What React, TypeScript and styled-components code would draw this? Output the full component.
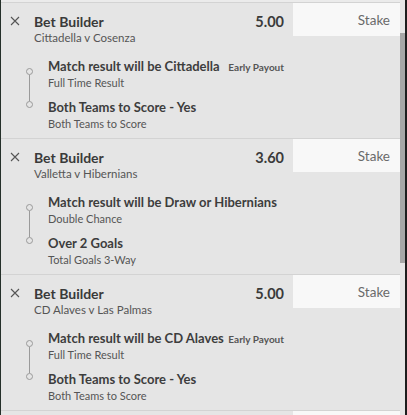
import React from "react";
import styled, { createGlobalStyle } from "styled-components";

const GlobalStyle = createGlobalStyle`
  html, body {
    margin: 0;
    padding: 0;
    background: #e5e5e5;
    overflow: hidden;
  }
  body {
    font-family: Lato, "Open Sans", "Liberation Sans", sans-serif;
    color: #3d3d3d;
  }
`;

type Selection = {
  name: string;
  market: string;
  earlyPayout?: boolean;
};

type Bet = {
  event: string;
  odds: string;
  selections: Selection[];
};

const bets: Bet[] = [
  {
    event: "Cittadella v Cosenza",
    odds: "5.00",
    selections: [
      { name: "Match result will be Cittadella", market: "Full Time Result", earlyPayout: true },
      { name: "Both Teams to Score - Yes", market: "Both Teams to Score" },
    ],
  },
  {
    event: "Valletta v Hibernians",
    odds: "3.60",
    selections: [
      { name: "Match result will be Draw or Hibernians", market: "Double Chance" },
      { name: "Over 2 Goals", market: "Total Goals 3-Way" },
    ],
  },
  {
    event: "CD Alaves v Las Palmas",
    odds: "5.00",
    selections: [
      { name: "Match result will be CD Alaves", market: "Full Time Result", earlyPayout: true },
      { name: "Both Teams to Score - Yes", market: "Both Teams to Score" },
    ],
  },
];

const Frame = styled.div`
  display: flex;
  height: 415px;
  width: 407px;
  border-left: 1px solid #25302a;
  box-sizing: border-box;
`;

const List = styled.div`
  flex: 1;
  padding-top: 2px;
  background: #ebebeb;
  overflow: hidden;
`;

const Card = styled.div`
  display: grid;
  grid-template-columns: 1fr 107px;
  border-top: 1px solid #d3d3d3;
  background: #e5e5e5;
  height: 136px;
  box-sizing: border-box;
`;

const Main = styled.div`
  padding: 8px 9px 8px 9px;
  min-width: 0;
`;

const Header = styled.div`
  display: flex;
  align-items: center;
  height: 20px;
`;

const CloseButton = styled.button`
  all: unset;
  display: flex;
  width: 10px;
  height: 10px;
  margin-right: 14px;
  cursor: pointer;
`;

const Title = styled.div`
  flex: 1;
  font-size: 14px;
  font-weight: 700;
  color: #3a3a3a;
`;

const Odds = styled.div`
  font-size: 14.5px;
  font-weight: 700;
  color: #3a3a3a;
`;

const EventName = styled.div`
  padding-left: 24px;
  font-size: 11.5px;
  line-height: 14px;
  color: #555;
`;

const Selections = styled.div`
  display: grid;
  grid-template-columns: 38px 1fr;
  margin-top: 12px;
`;

const Timeline = styled.div`
  display: flex;
  flex-direction: column;
  align-items: center;
  width: 8px;
  margin-left: 15px;
  margin-top: 11px;
  height: 40px;
`;

const Dot = styled.div`
  width: 7px;
  height: 7px;
  border: 1px solid #9a9a9a;
  border-radius: 50%;
  box-sizing: border-box;
`;

const Line = styled.div`
  flex: 1;
  width: 1px;
  background: #9a9a9a;
`;

const SelectionList = styled.div`
  display: flex;
  flex-direction: column;
  gap: 8px;
`;

const SelectionRow = styled.div`
  display: flex;
  align-items: baseline;
  height: 18px;
`;

const SelectionName = styled.div`
  flex: 1;
  font-size: 13px;
  line-height: 18px;
  font-weight: 700;
  color: #3d3d3d;
  white-space: nowrap;
`;

const Badge = styled.div`
  font-size: 10px;
  font-weight: 700;
  color: #555;
  white-space: nowrap;
`;

const Market = styled.div`
  font-size: 11px;
  line-height: 15px;
  color: #555;
`;

const StakeBox = styled.div`
  height: 33px;
  background: #f8f8f8;
  display: flex;
  align-items: center;
  justify-content: flex-end;
  padding-right: 10px;
  font-size: 13.5px;
  color: #6a6a6a;
`;

const Scrollbar = styled.div`
  width: 5px;
  background: #e6e6e6;
  padding-top: 33px;
  box-sizing: border-box;
`;

const Thumb = styled.div`
  height: 230px;
  background: #a7a7a7;
`;

const Edge = styled.div`
  width: 2px;
  background: #1e1e1e;
`;

const CloseIcon = () => (
  <svg width="10" height="10" viewBox="0 0 10 10">
    <path d="M1 1 L9 9 M9 1 L1 9" stroke="#555" strokeWidth="1.1" fill="none" />
  </svg>
);

const BetCard = ({ bet }: { bet: Bet }) => (
  <Card>
    <Main>
      <Header>
        <CloseButton>
          <CloseIcon />
        </CloseButton>
        <Title>Bet Builder</Title>
        <Odds>{bet.odds}</Odds>
      </Header>
      <EventName>{bet.event}</EventName>
      <Selections>
        <Timeline>
          <Dot />
          <Line />
          <Dot />
        </Timeline>
        <SelectionList>
          {bet.selections.map((s) => (
            <div key={s.name}>
              <SelectionRow>
                <SelectionName>{s.name}</SelectionName>
                {s.earlyPayout && <Badge>Early Payout</Badge>}
              </SelectionRow>
              <Market>{s.market}</Market>
            </div>
          ))}
        </SelectionList>
      </Selections>
    </Main>
    <StakeBox>Stake</StakeBox>
  </Card>
);

const EmptyCard = styled(Card)`
  &::after {
    content: "";
    grid-column: 2;
    height: 33px;
    background: #f8f8f8;
  }
`;

export default function App() {
  return (
    <>
      <GlobalStyle />
      <Frame>
        <List>
          {bets.map((bet, i) => (
            <BetCard key={i} bet={bet} />
          ))}
          <EmptyCard />
        </List>
        <Scrollbar>
          <Thumb />
        </Scrollbar>
        <Edge />
      </Frame>
    </>
  );
}
